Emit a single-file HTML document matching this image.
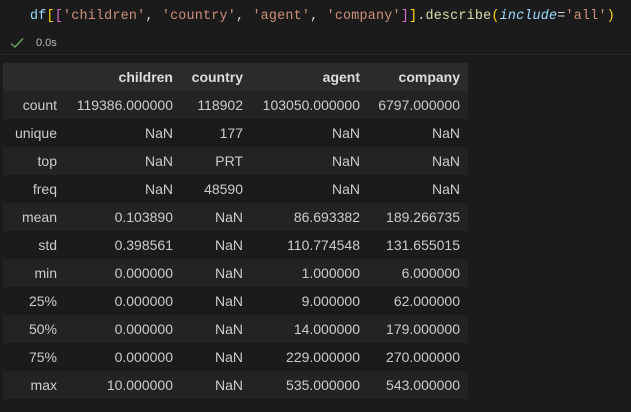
<!DOCTYPE html>
<html><head><style>
html,body{margin:0;padding:0;width:631px;height:412px;overflow:hidden;background:#1b1b1b;}
.code{position:absolute;left:30px;top:9px;font-family:"Liberation Mono",monospace;font-size:13.4px;color:#d4d4d4;white-space:pre;letter-spacing:0.2px}
.chk{position:absolute;left:10px;top:37px;}
.time{position:absolute;left:36px;top:37px;font-family:"Liberation Sans",sans-serif;font-size:11px;color:#bbb}
.sep{position:absolute;left:0;top:54px;width:631px;height:1px;background:#2a2a2a}
table{position:absolute;left:3px;top:63px;border-collapse:collapse;table-layout:fixed;font-family:"Liberation Sans",sans-serif;font-size:14px;color:#ccc;width:465px}
td,th{height:28px;padding:0 8px 0 0;text-align:right;white-space:nowrap;overflow:visible}
th{background:#2b2b2b;font-weight:bold;color:#ddd}
tr:nth-child(even) td{background:#232323}
</style></head><body>
<div class="code"><span style="color:#9cdcfe">df</span><span style="color:#ffd700">[</span><span style="color:#da70d6">[</span><span style="color:#ce9178">'children'</span>, <span style="color:#ce9178">'country'</span>, <span style="color:#ce9178">'agent'</span>, <span style="color:#ce9178">'company'</span><span style="color:#da70d6">]</span><span style="color:#ffd700">]</span>.<span style="color:#dcdcaa">describe</span><span style="color:#ffd700">(</span><span style="color:#9cdcfe;font-style:italic">include</span>=<span style="color:#ce9178">'all'</span><span style="color:#ffd700">)</span></div>
<svg class="chk" width="14" height="12" viewBox="0 0 14 12"><path d="M1 6.5 L5 10 L13 1.5" stroke="#6ca35e" stroke-width="1.4" fill="none"/></svg>
<div class="time">0.0s</div>
<div class="sep"></div>
<table>
<colgroup><col style="width:62px"><col style="width:116px"><col style="width:70px"><col style="width:117px"><col style="width:100px"></colgroup>
<tr><th></th><th>children</th><th>country</th><th>agent</th><th>company</th></tr>
<tr><td>count</td><td>119386.000000</td><td>118902</td><td>103050.000000</td><td>6797.000000</td></tr>
<tr><td>unique</td><td>NaN</td><td>177</td><td>NaN</td><td>NaN</td></tr>
<tr><td>top</td><td>NaN</td><td>PRT</td><td>NaN</td><td>NaN</td></tr>
<tr><td>freq</td><td>NaN</td><td>48590</td><td>NaN</td><td>NaN</td></tr>
<tr><td>mean</td><td>0.103890</td><td>NaN</td><td>86.693382</td><td>189.266735</td></tr>
<tr><td>std</td><td>0.398561</td><td>NaN</td><td>110.774548</td><td>131.655015</td></tr>
<tr><td>min</td><td>0.000000</td><td>NaN</td><td>1.000000</td><td>6.000000</td></tr>
<tr><td>25%</td><td>0.000000</td><td>NaN</td><td>9.000000</td><td>62.000000</td></tr>
<tr><td>50%</td><td>0.000000</td><td>NaN</td><td>14.000000</td><td>179.000000</td></tr>
<tr><td>75%</td><td>0.000000</td><td>NaN</td><td>229.000000</td><td>270.000000</td></tr>
<tr><td>max</td><td>10.000000</td><td>NaN</td><td>535.000000</td><td>543.000000</td></tr>
</table>
</body></html>
